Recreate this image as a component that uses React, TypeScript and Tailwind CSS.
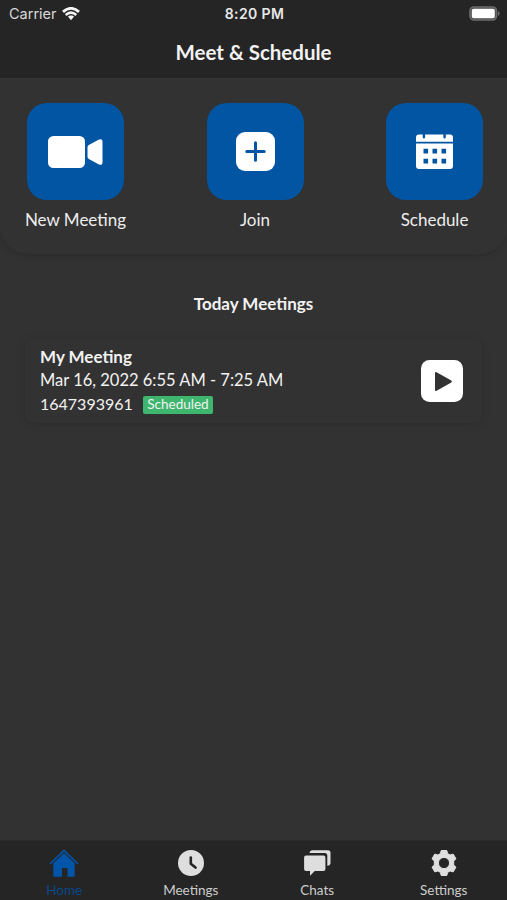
import type { ReactNode } from "react";

function WifiIcon() {
  return (
    <svg width="18" height="14" viewBox="0 0 18 14" fill="none" stroke="#f4f4f4">
      <path d="M1 4.900Q9 -2.200 17 4.900" strokeWidth="2.800" />
      <path d="M3.700 8Q9 3.300 14.300 8" strokeWidth="2.500" />
      <path d="M9 8.400c-1.300 0-2.300.5-3.100 1.200L9 13.200l3.100-3.600C11.300 8.900 10.300 8.400 9 8.400z" fill="#f4f4f4" stroke="none" />
    </svg>
  );
}

function BatteryIcon() {
  return (
    <svg width="31" height="15" viewBox="0 0 31 15">
      <rect x="1" y="1" width="26.500" height="13" rx="4" fill="#4a4a4a" stroke="#6c6c6c" strokeWidth="1.600" />
      <rect x="2.800" y="2.800" width="23" height="9.400" rx="1.800" fill="#fff" />
      <path d="M29 5v5q1.600-.8 1.600-2.500T29 5z" fill="#6c6c6c" />
    </svg>
  );
}

function VideoIcon() {
  return (
    <svg width="55" height="32" viewBox="0 0 55 32" fill="#fff">
      <rect width="37" height="32" rx="5.500" />
      <path d="M39.500 11.500q0-1.600 1.300-2.500L50.500 3.700Q54.500 2 54.500 6v20q0 4-4 2.300L40.800 23q-1.300-.9-1.300-2.500z" />
    </svg>
  );
}

function PlusIcon() {
  return (
    <svg width="39" height="39" viewBox="0 0 39 39">
      <rect width="39" height="39" rx="9" fill="#fff" />
      <path d="M19.500 10.800v17.400M10.800 19.500h17.400" stroke="#0155a2" strokeWidth="3" strokeLinecap="round" />
    </svg>
  );
}

function CalendarIcon() {
  return (
    <svg width="37" height="35" viewBox="0 0 37 35" fill="#fff">
      <path d="M3 0.500h3.700v2.800q0 1.300 1.200 1.300T9.100 3.300V0.500h18.300v2.800q0 1.300 1.200 1.300t1.200-1.300V0.500H34q3 0 3 3V7.700H0V3.500q0-3 3-3z" />
      <path fillRule="evenodd" d="M0 9.500h37V32q0 3-3 3H3q-3 0-3-3zM7.500 14.800v4.600h4.600v-4.600zm9 0v4.600h4.600v-4.600zm9 0v4.600h4.600v-4.600zm-18 10v4.600h4.600v-4.600zm9 0v4.600h4.600v-4.600zm9 0v4.600h4.600v-4.600z" />
    </svg>
  );
}

function PlayIcon() {
  return (
    <svg width="42" height="42" viewBox="0 0 42 42">
      <rect width="42" height="42" rx="8.500" fill="#fff" />
      <path d="M14 13.200q0-1.800 1.600-1L30.300 20.600q1.300.9 0 1.800l-14.700 8.400Q14 31.600 14 30z" fill="#323232" />
    </svg>
  );
}

function HomeIcon() {
  return (
    <svg width="30" height="28" viewBox="0 0 30 28">
      <path d="M4.300 14.300 15 4l10.700 10.300V27q0 .7-.7.700h-6.500V19h-5.500v8.700H5q-.7 0-.7-.7z" fill="#0155a8" />
      <path d="M1 15 15 1.400 29 15" fill="none" stroke="#0155a8" strokeWidth="1.700" />
    </svg>
  );
}

function ClockIcon() {
  return (
    <svg width="26" height="26" viewBox="0 0 26 26">
      <circle cx="13" cy="13" r="13" fill="#dedede" />
      <path d="M12.800 7.500v6.200l4.700 3.900" fill="none" stroke="#252525" strokeWidth="2.600" strokeLinecap="round" strokeLinejoin="round" />
    </svg>
  );
}

function ChatsIcon() {
  return (
    <svg width="27" height="26" viewBox="0 0 27 26" fill="#dedede">
      <path d="M2 5.500h17.500q1.900 0 1.900 1.900v11.700q0 1.900-1.900 1.900h-8.700L6 25.800V21H2q-1.900 0-1.900-1.900V7.400Q.1 5.500 2 5.500z" />
      <path d="M5.500 2.700Q5.800.2 8 .2h16q2.500 0 2.500 2.500V13q0 2.400-3.200 2.800V5.500q0-2.500-2.500-2.500H5.500z" />
    </svg>
  );
}

function GearIcon() {
  return (
    <svg width="26" height="26" viewBox="0 0 26 26">
      <path
        fill="#dedede"
        stroke="#dedede"
        strokeLinejoin="round"
        fillRule="evenodd"
        d="M10.200.5h5.600l.8 3.100 2.500 1.400 3.100-.9 2.800 4.700L22.700 11v4l2.300 2.200-2.800 4.700-3.100-.9-2.500 1.400-.8 3.100h-5.600l-.8-3.100L6.900 21l-3.100.9L1 17.200 3.300 15v-4L1 8.800l2.800-4.700 3.100.9 2.500-1.400zM13 7.400a5.600 5.600 0 1 0 0 11.200 5.600 5.600 0 0 0 0-11.200z"
      />
    </svg>
  );
}

function Action({ icon, children }: { icon: ReactNode; children: ReactNode }) {
  return (
    <button className="flex w-[97px] flex-col items-center">
      <span className="flex size-[97px] items-center justify-center rounded-[20px] bg-[#0155a2]">{icon}</span>
      <span className="mt-2 whitespace-nowrap text-[17px] leading-6 text-[#ededed]">{children}</span>
    </button>
  );
}

function Tab({ icon, active, children }: { icon: ReactNode; active?: boolean; children: ReactNode }) {
  return (
    <button className="flex w-[126.500px] flex-col items-center">
      <span className="flex h-7 items-center justify-center">{icon}</span>
      <span className={`mt-[5px] text-[13.500px] leading-4 ${active ? "text-[#07488b]" : "text-[#cdcdcd]"}`}>
        {children}
      </span>
    </button>
  );
}

export default function App() {
  return (
    <div className="flex h-[900px] w-[507px] flex-col overflow-hidden bg-[#323232] font-['Lato',sans-serif] text-[#f2f2f2]">
      <header className="h-[79px] shrink-0 border-b border-[#373737] bg-[#252525]">
        <div className="grid h-[27px] grid-cols-3 items-center pr-[7px] pl-[9px] font-['Inter',sans-serif] text-[14px]">
          <div className="flex items-center gap-[5px]">
            <span className="text-[14.500px] text-[#d8d8d8]">Carrier</span>
            <WifiIcon />
          </div>
          <span className="text-center font-semibold tracking-[0.4px] text-[#e8e8e8]">8:20 PM</span>
          <div className="flex justify-end">
            <BatteryIcon />
          </div>
        </div>
        <h1 className="text-center text-[20.500px] leading-[51px] font-bold">Meet &amp; Schedule</h1>
      </header>

      <section className="flex h-[175px] shrink-0 justify-between rounded-b-[28px] pt-6 pr-6 pl-[27px] shadow-[0_2px_6px_rgba(0,0,0,0.15)]">
        <Action icon={<VideoIcon />}>New Meeting</Action>
        <Action icon={<PlusIcon />}>Join</Action>
        <Action icon={<CalendarIcon />}>Schedule</Action>
      </section>

      <main className="flex-1 px-[25px] pt-[38px]">
        <h2 className="text-center text-[17px] leading-6 font-bold">Today Meetings</h2>
        <article className="mt-[23px] flex h-[84px] items-center justify-between rounded-[8px] pr-[19px] pl-[15px] shadow-[0_1px_8px_rgba(0,0,0,0.14)]">
          <div className="pb-[2px] text-[16.500px] leading-[23px]">
            <h3 className="text-[17px] font-bold">My Meeting</h3>
            <p className="leading-6">Mar 16, 2022 6:55 AM - 7:25 AM</p>
            <p className="flex items-center">
              <span className="w-[103px] text-[16px]">1647393961</span>
              <span className="mt-[2px] flex h-[18px] w-[70px] items-center justify-center rounded-[2px] bg-[#3eb66e] text-[13.500px]">Scheduled</span>
            </p>
          </div>
          <PlayIcon />
        </article>
      </main>

      <nav className="flex h-[60px] shrink-0 border-t border-[#2b2b2b] bg-[#252525] pt-2 pl-px">
        <Tab icon={<HomeIcon />} active>Home</Tab>
        <Tab icon={<ClockIcon />}>Meetings</Tab>
        <Tab icon={<ChatsIcon />}>Chats</Tab>
        <Tab icon={<GearIcon />}>Settings</Tab>
      </nav>
    </div>
  );
}
